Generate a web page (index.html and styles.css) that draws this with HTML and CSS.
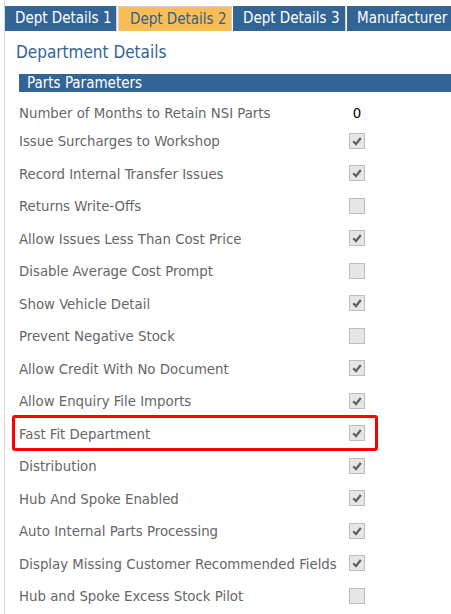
FILE: index.html
```html
<!DOCTYPE html>
<html>
<head>
<meta charset="utf-8">
<link rel="stylesheet" href="styles.css">
</head>
<body>
<div class="frame">
  <div class="tabs">
    <div class="tab t1">Dept Details 1</div>
    <div class="tab t2 active">Dept Details 2</div>
    <div class="tab t3">Dept Details 3</div>
    <div class="tab t4">Manufacturer</div>
  </div>
  <div class="content">
    <h1 class="title">Department Details</h1>
    <div class="section">
      <div class="section-head">Parts Parameters</div>
      <div class="row first"><span class="label">Number of Months to Retain NSI Parts</span><span class="ctrl num">0</span></div>
      <div class="row"><span class="label">Issue Surcharges to Workshop</span><span class="ctrl"><span class="cb on"></span></span></div>
      <div class="row"><span class="label">Record Internal Transfer Issues</span><span class="ctrl"><span class="cb on"></span></span></div>
      <div class="row"><span class="label">Returns Write-Offs</span><span class="ctrl"><span class="cb"></span></span></div>
      <div class="row"><span class="label">Allow Issues Less Than Cost Price</span><span class="ctrl"><span class="cb on"></span></span></div>
      <div class="row"><span class="label">Disable Average Cost Prompt</span><span class="ctrl"><span class="cb"></span></span></div>
      <div class="row"><span class="label">Show Vehicle Detail</span><span class="ctrl"><span class="cb on"></span></span></div>
      <div class="row"><span class="label">Prevent Negative Stock</span><span class="ctrl"><span class="cb"></span></span></div>
      <div class="row"><span class="label">Allow Credit With No Document</span><span class="ctrl"><span class="cb on"></span></span></div>
      <div class="row"><span class="label">Allow Enquiry File Imports</span><span class="ctrl"><span class="cb on"></span></span></div>
      <div class="row highlight"><span class="label">Fast Fit Department</span><span class="ctrl"><span class="cb on"></span></span></div>
      <div class="row"><span class="label">Distribution</span><span class="ctrl"><span class="cb on"></span></span></div>
      <div class="row"><span class="label">Hub And Spoke Enabled</span><span class="ctrl"><span class="cb on"></span></span></div>
      <div class="row"><span class="label">Auto Internal Parts Processing</span><span class="ctrl"><span class="cb on"></span></span></div>
      <div class="row"><span class="label">Display Missing Customer Recommended Fields</span><span class="ctrl"><span class="cb on"></span></span></div>
      <div class="row"><span class="label">Hub and Spoke Excess Stock Pilot</span><span class="ctrl"><span class="cb"></span></span></div>
    </div>
  </div>
</div>
</body>
</html>
```
FILE: styles.css
```css
html, body {
  margin: 0;
  padding: 0;
  background: #fff;
}
body {
  font-family: "DejaVu Sans Condensed", "DejaVu Sans", sans-serif;
  width: 451px;
  height: 614px;
  overflow: hidden;
}
.frame {
  margin-left: 4px;
  border-left: 1px solid #d6d6d6;
  height: 614px;
  padding-top: 6px;
  box-sizing: border-box;
}
.tabs {
  display: flex;
  gap: 1px;
  height: 25px;
  white-space: nowrap;
}
.tab {
  flex: none;
  box-sizing: border-box;
  height: 25px;
  line-height: 25px;
  font-size: 15px;
  color: #fff;
  background: #336496;
  padding-left: 10px;
  border-right: 1px solid #cfcfcf;
}
.t1 { width: 112px; }
.t2 { width: 114px; }
.t3 { width: 113px; }
.t4 { width: 120px; border-right: none; }
.tab.active {
  background: #f8bd55;
  color: #2f5f8f;
  border: 1px solid #d2d2d2;
  border-bottom: none;
  line-height: 24px;
  padding-left: 11px;
}
.content {
  padding-left: 11px;
}
.title {
  margin: 0;
  font-weight: normal;
  font-size: 17px;
  color: #336496;
  height: 43px;
  line-height: 42px;
}
.section-head {
  margin-left: 3px;
  height: 18px;
  line-height: 18px;
  background: #336496;
  color: #fff;
  font-size: 15px;
  padding-left: 8px;
}
.row {
  display: grid;
  grid-template-columns: 330px 16px;
  align-items: center;
  height: 32.5px;
  width: 346px;
  margin-left: 3px;
  font-size: 14.8px;
  color: #666;
  box-sizing: border-box;
  position: relative;
}
.row.first {
  height: 32.5px;
  padding-top: 8px;
}
.ctrl {
  display: flex;
  justify-content: center;
}
.num {
  color: #000;
}
.cb {
  display: block;
  width: 14px;
  height: 14px;
  border: 1px solid #bdbdbd;
  background: #e6e6e6;
}
.cb.on {
  background: #e6e6e6 url("data:image/svg+xml;utf8,<svg xmlns='http://www.w3.org/2000/svg' width='14' height='14' viewBox='0 0 14 14'><path d='M3.2 7.2 L6 10 L10.8 4' fill='none' stroke='%23606060' stroke-width='2.2'/></svg>") no-repeat center;
}
.highlight::after {
  content: "";
  position: absolute;
  left: -7px;
  width: 366px;
  top: -2px;
  height: 36px;
  box-sizing: border-box;
  border: 3px solid #f00;
  border-radius: 3px;
}
```
